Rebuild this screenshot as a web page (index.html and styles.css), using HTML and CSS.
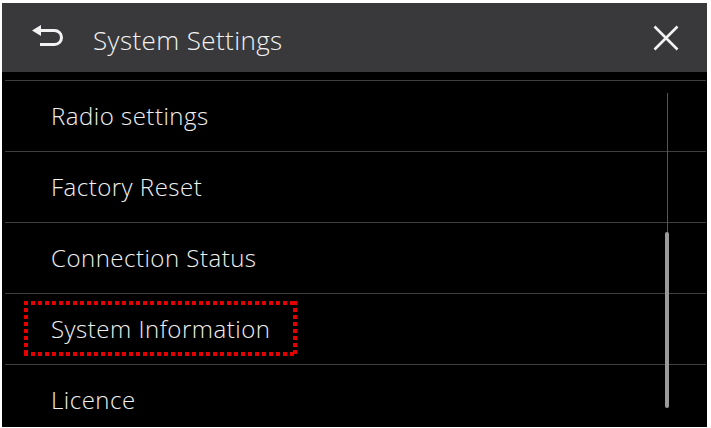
FILE: index.html
```html
<!DOCTYPE html>
<html lang="en">
<head>
    <meta charset="UTF-8">
    <meta name="viewport" content="width=device-width, initial-scale=1.0">
    <title>System Settings</title>
    <link rel="stylesheet" href="styles.css">
</head>
<body>
    <div class="screen">
        <header class="topbar">
            <button class="icon-btn back" aria-label="Back">
                <svg width="32" height="24" viewBox="0 0 32 24">
                    <polygon points="1,6.5 10,1 10,12" fill="#f2f2f2"/>
                    <path d="M9 6.5 H23.5 A7 7 0 0 1 23.5 20.5 H9" fill="none" stroke="#f2f2f2" stroke-width="3"/>
                </svg>
            </button>
            <h1 class="title">System Settings</h1>
            <button class="icon-btn close" aria-label="Close">
                <svg width="26" height="26" viewBox="0 0 26 26">
                    <path d="M1.5 1.5 L24.5 24.5 M24.5 1.5 L1.5 24.5" stroke="#f2f2f2" stroke-width="2.6" fill="none"/>
                </svg>
            </button>
        </header>

        <div class="list-wrap">
            <ul class="menu">
                <li class="menu-item">Radio settings</li>
                <li class="menu-item">Factory Reset</li>
                <li class="menu-item">Connection Status</li>
                <li class="menu-item"><span class="highlight">System Information</span></li>
                <li class="menu-item">Licence</li>
            </ul>
            <div class="scrollbar">
                <div class="thumb"></div>
            </div>
        </div>
    </div>
</body>
</html>
```

FILE: styles.css
```css
/* Page frame */
body {
    margin: 0;
    background-color: #fff;
    font-family: 'Open Sans', 'Noto Sans', sans-serif;
}

.screen {
    width: 705px;
    height: 424px;
    margin: 3px 0 0 2px;
    background-color: #000;
    overflow: hidden;
}

/* Header bar */
.topbar {
    height: 69px;
    background-color: #39393c;
    display: flex;
    align-items: center;
    padding-left: 29px;
    padding-right: 28px;
}

.icon-btn {
    background: none;
    border: none;
    padding: 0;
    display: flex;
    cursor: pointer;
}

.back {
    margin-top: -3px;
}

.title {
    flex: 1;
    margin: 4px 0 0 30px;
    color: #f2f2f2;
    font-size: 26px;
    font-weight: 350;
    letter-spacing: 0.4px;
}

/* Menu list */
.list-wrap {
    position: relative;
    margin-top: 8px;
}

.menu {
    list-style: none;
    margin: 0 1px 0 3px;
    padding: 0;
}

.menu-item {
    height: 70px;
    box-sizing: border-box;
    height: 71px;
    padding-bottom: 2px;
    border-top: 1px solid #3e3e3e;
    display: flex;
    align-items: center;
    padding-left: 46px;
    color: #f0f0f0;
    font-size: 24px;
    font-weight: 350;
    letter-spacing: 0.5px;
}

/* Red dotted marker */
.highlight {
    margin-left: -27px;
    padding: 11px 27px 11px 27px;
    background:
        repeating-linear-gradient(90deg, #e40000 0 4px, transparent 4px 7px) top / 100% 4px no-repeat,
        repeating-linear-gradient(90deg, #e40000 0 4px, transparent 4px 7px) bottom / 100% 4px no-repeat,
        repeating-linear-gradient(180deg, #e40000 0 4px, transparent 4px 7px) left / 4px 100% no-repeat,
        repeating-linear-gradient(180deg, #e40000 0 4px, transparent 4px 7px) right / 4px 100% no-repeat;
}

/* Scroll indicator */
.scrollbar {
    position: absolute;
    left: 663px;
    top: 13px;
    width: 4px;
    height: 316px;
}

.scrollbar::before {
    content: '';
    position: absolute;
    left: 1.5px;
    top: 0;
    width: 1px;
    height: 140px;
    background-color: #555;
}

.thumb {
    position: absolute;
    left: 0;
    top: 139px;
    width: 4px;
    height: 176px;
    border-radius: 2px;
    background-color: #9a9a9a;
}
```
